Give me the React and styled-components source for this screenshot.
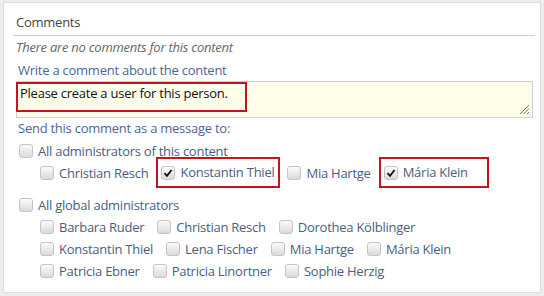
import React from "react";
import styled, { createGlobalStyle } from "styled-components";

const Global = createGlobalStyle`
  html, body { margin: 0; padding: 0; background: #ececec; }
  body { font-family: "Open Sans", "Liberation Sans", sans-serif; }
`;

const Page = styled.div`
  width: 544px;
  height: 296px;
  padding: 2px 3px 3px 3px;
  box-sizing: border-box;
`;

const Panel = styled.div`
  background: #fff;
  border: 1px solid #dedede;
  height: 100%;
  box-sizing: border-box;
  padding: 10px 5px 0 9px;
  font-size: 13px;
  line-height: 18px;
  letter-spacing: -0.25px;
`;

const Header = styled.div`
  color: #444;
  padding: 0 0 4px 3px;
  border-bottom: 1px solid #cfcfcf;
`;

const Empty = styled.div`
  font-style: italic;
  color: #666;
  margin-top: 2px;
  padding-left: 3px;
`;

const Body = styled.div`
  padding-left: 3px;
`;

const FieldLabel = styled.div`
  color: #4d6594;
  margin-top: ${(p) => p.$mt}px;
  padding-left: 2px;
`;

const Area = styled.div`
  position: relative;
  margin-top: 2px;
  height: 37px;
  width: 517px;
  box-sizing: border-box;
  background: #fdfde9;
  border: 1px solid #cfcfcf;
`;

const Highlight = styled.div`
  border: 2px solid #c8121c;
  width: 231px;
  height: 30px;
  margin-left: -1px;
  box-sizing: border-box;
  padding: 1px 0 0 2px;
  color: #111;
  line-height: 17px;
`;

const Grip = styled.svg`
  position: absolute;
  right: 2px;
  bottom: 2px;
`;

const Row = styled.div`
  display: flex;
  flex-wrap: wrap;
  align-items: center;
  gap: 0 13px;
  padding-left: ${(p) => (p.$indent ? 24 : 3)}px;
  height: ${(p) => p.$h || 22}px;
  margin-top: ${(p) => p.$mt || 0}px;
`;

const Item = styled.label`
  display: inline-flex;
  align-items: center;
  gap: 5px;
  color: #4a5d83;
  white-space: nowrap;
  ${(p) =>
    p.$marked
      ? `border: 2px solid #c8121c; padding: 5px ${p.$padR}px 5px 3px; margin: 0 -${p.$padR + 2}px 0 -5px; line-height: 17px;`
      : ""}
`;

const Box = styled.span`
  width: 14px;
  height: 14px;
  flex: none;
  box-sizing: border-box;
  border: 1px solid #c4c4c4;
  border-radius: 3px;
  background: linear-gradient(#fbfbfb, #dadada);
  display: inline-flex;
  align-items: center;
  justify-content: center;
`;

const Check = ({ on }) => (
  <Box>
    {on && (
      <svg width="10" height="10" viewBox="0 0 10 10">
        <path d="M1.5 5.2 L4 7.8 L8.6 2" fill="none" stroke="#111" strokeWidth="1.8" />
      </svg>
    )}
  </Box>
);

const Opt = ({ children, on, marked, padR = 4 }) => (
  <Item $marked={marked} $padR={padR}>
    <Check on={on} />
    {children}
  </Item>
);

export default function App() {
  return (
    <Page>
      <Global />
      <Panel>
        <Header>Comments</Header>
        <Empty>There are no comments for this content</Empty>
        <Body>
          <FieldLabel $mt={5}>Write a comment about the content</FieldLabel>
          <Area>
            <Highlight>Please create a user for this person.</Highlight>
            <Grip width="12" height="12" viewBox="0 0 12 12">
              <path d="M11 2 L2 11 M11 5.5 L5.5 11 M11 9 L9 11" stroke="#777" strokeWidth="1" />
            </Grip>
          </Area>
          <FieldLabel $mt={1}>Send this comment as a message to:</FieldLabel>
          <Row $h={18} $mt={5}>
            <Opt>All administrators of this content</Opt>
          </Row>
          <Row $indent $h={31} $mt={-3}>
            <Opt>Christian Resch</Opt>
            <Opt on marked>Konstantin Thiel</Opt>
            <Opt>Mia Hartge</Opt>
            <Opt on marked padR={19}>Mária Klein</Opt>
          </Row>
          <Row $mt={6}>
            <Opt>All global administrators</Opt>
          </Row>
          <Row $indent>
            <Opt>Barbara Ruder</Opt>
            <Opt>Christian Resch</Opt>
            <Opt>Dorothea Kölblinger</Opt>
          </Row>
          <Row $indent>
            <Opt>Konstantin Thiel</Opt>
            <Opt>Lena Fischer</Opt>
            <Opt>Mia Hartge</Opt>
            <Opt>Mária Klein</Opt>
          </Row>
          <Row $indent>
            <Opt>Patricia Ebner</Opt>
            <Opt>Patricia Linortner</Opt>
            <Opt>Sophie Herzig</Opt>
          </Row>
        </Body>
      </Panel>
    </Page>
  );
}
